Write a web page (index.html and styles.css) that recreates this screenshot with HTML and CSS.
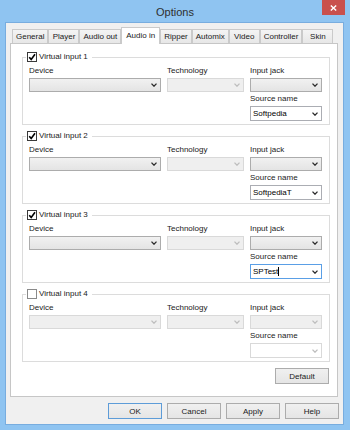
FILE: index.html
```html
<!DOCTYPE html>
<html>
<head>
<meta charset="utf-8">
<title>Options</title>
<link rel="stylesheet" href="styles.css">
</head>
<body>
<div class="window">
  <div class="titlebar">
    <span></span>
    <div class="title">Options</div>
    <button class="close" aria-label="Close"><svg width="7" height="6" viewBox="0 0 7 6"><path d="M0.8 0.5 L6.2 5.5 M6.2 0.5 L0.8 5.5" stroke="#fff" stroke-width="1.4" fill="none"/></svg></button>
  </div>
  <div class="client">
    <div class="tabs">
      <div class="tab">General</div>
      <div class="tab">Player</div>
      <div class="tab">Audio out</div>
      <div class="tab active">Audio in</div>
      <div class="tab">Ripper</div>
      <div class="tab">Automix</div>
      <div class="tab">Video</div>
      <div class="tab">Controller</div>
      <div class="tab">Skin</div>
    </div>
    <div class="panel">
      <fieldset class="group">
        <legend class="legend"><span class="check"><svg width="8" height="8" viewBox="0 0 8 8"><path d="M1.2 4.2 L3.2 6.4 L7 1.2" stroke="#000" stroke-width="1.6" fill="none"/></svg></span>Virtual input 1</legend>
        <div class="grid">
          <div class="lbl">Device</div>
          <div class="lbl">Technology</div>
          <div class="lbl">Input jack</div>
          <div class="combo"><span class="val"></span><svg class="chev" width="6" height="4" viewBox="0 0 6 4"><path d="M0.5 0.6 L3 3.2 L5.5 0.6" stroke="currentColor" stroke-width="1.3" fill="none"/></svg></div>
          <div class="combo dis"><span class="val"></span><svg class="chev" width="6" height="4" viewBox="0 0 6 4"><path d="M0.5 0.6 L3 3.2 L5.5 0.6" stroke="currentColor" stroke-width="1.3" fill="none"/></svg></div>
          <div class="combo"><span class="val"></span><svg class="chev" width="6" height="4" viewBox="0 0 6 4"><path d="M0.5 0.6 L3 3.2 L5.5 0.6" stroke="currentColor" stroke-width="1.3" fill="none"/></svg></div>
          <div class="lbl c3">Source name</div>
          <div class="combo edit c3"><span class="val">Softpedia</span><svg class="chev" width="6" height="4" viewBox="0 0 6 4"><path d="M0.5 0.6 L3 3.2 L5.5 0.6" stroke="currentColor" stroke-width="1.3" fill="none"/></svg></div>
        </div>
      </fieldset>
      <fieldset class="group">
        <legend class="legend"><span class="check"><svg width="8" height="8" viewBox="0 0 8 8"><path d="M1.2 4.2 L3.2 6.4 L7 1.2" stroke="#000" stroke-width="1.6" fill="none"/></svg></span>Virtual input 2</legend>
        <div class="grid">
          <div class="lbl">Device</div>
          <div class="lbl">Technology</div>
          <div class="lbl">Input jack</div>
          <div class="combo"><span class="val"></span><svg class="chev" width="6" height="4" viewBox="0 0 6 4"><path d="M0.5 0.6 L3 3.2 L5.5 0.6" stroke="currentColor" stroke-width="1.3" fill="none"/></svg></div>
          <div class="combo dis"><span class="val"></span><svg class="chev" width="6" height="4" viewBox="0 0 6 4"><path d="M0.5 0.6 L3 3.2 L5.5 0.6" stroke="currentColor" stroke-width="1.3" fill="none"/></svg></div>
          <div class="combo"><span class="val"></span><svg class="chev" width="6" height="4" viewBox="0 0 6 4"><path d="M0.5 0.6 L3 3.2 L5.5 0.6" stroke="currentColor" stroke-width="1.3" fill="none"/></svg></div>
          <div class="lbl c3">Source name</div>
          <div class="combo edit c3"><span class="val">SoftpediaT</span><svg class="chev" width="6" height="4" viewBox="0 0 6 4"><path d="M0.5 0.6 L3 3.2 L5.5 0.6" stroke="currentColor" stroke-width="1.3" fill="none"/></svg></div>
        </div>
      </fieldset>
      <fieldset class="group">
        <legend class="legend"><span class="check"><svg width="8" height="8" viewBox="0 0 8 8"><path d="M1.2 4.2 L3.2 6.4 L7 1.2" stroke="#000" stroke-width="1.6" fill="none"/></svg></span>Virtual input 3</legend>
        <div class="grid">
          <div class="lbl">Device</div>
          <div class="lbl">Technology</div>
          <div class="lbl">Input jack</div>
          <div class="combo"><span class="val"></span><svg class="chev" width="6" height="4" viewBox="0 0 6 4"><path d="M0.5 0.6 L3 3.2 L5.5 0.6" stroke="currentColor" stroke-width="1.3" fill="none"/></svg></div>
          <div class="combo dis"><span class="val"></span><svg class="chev" width="6" height="4" viewBox="0 0 6 4"><path d="M0.5 0.6 L3 3.2 L5.5 0.6" stroke="currentColor" stroke-width="1.3" fill="none"/></svg></div>
          <div class="combo"><span class="val"></span><svg class="chev" width="6" height="4" viewBox="0 0 6 4"><path d="M0.5 0.6 L3 3.2 L5.5 0.6" stroke="currentColor" stroke-width="1.3" fill="none"/></svg></div>
          <div class="lbl c3">Source name</div>
          <div class="combo edit focus c3"><span class="val">SPTest<span class="caret"></span></span><svg class="chev" width="6" height="4" viewBox="0 0 6 4"><path d="M0.5 0.6 L3 3.2 L5.5 0.6" stroke="currentColor" stroke-width="1.3" fill="none"/></svg></div>
        </div>
      </fieldset>
      <fieldset class="group">
        <legend class="legend"><span class="check off"></span>Virtual input 4</legend>
        <div class="grid">
          <div class="lbl">Device</div>
          <div class="lbl">Technology</div>
          <div class="lbl">Input jack</div>
          <div class="combo dis"><span class="val"></span><svg class="chev" width="6" height="4" viewBox="0 0 6 4"><path d="M0.5 0.6 L3 3.2 L5.5 0.6" stroke="currentColor" stroke-width="1.3" fill="none"/></svg></div>
          <div class="combo dis"><span class="val"></span><svg class="chev" width="6" height="4" viewBox="0 0 6 4"><path d="M0.5 0.6 L3 3.2 L5.5 0.6" stroke="currentColor" stroke-width="1.3" fill="none"/></svg></div>
          <div class="combo dis"><span class="val"></span><svg class="chev" width="6" height="4" viewBox="0 0 6 4"><path d="M0.5 0.6 L3 3.2 L5.5 0.6" stroke="currentColor" stroke-width="1.3" fill="none"/></svg></div>
          <div class="lbl c3">Source name</div>
          <div class="combo edit dis c3"><span class="val"></span><svg class="chev" width="6" height="4" viewBox="0 0 6 4"><path d="M0.5 0.6 L3 3.2 L5.5 0.6" stroke="currentColor" stroke-width="1.3" fill="none"/></svg></div>
        </div>
      </fieldset>
      <div class="panel-foot"><button class="btn">Default</button></div>
    </div>
    <div class="buttons">
      <button class="btn primary">OK</button>
      <button class="btn">Cancel</button>
      <button class="btn">Apply</button>
      <button class="btn">Help</button>
    </div>
  </div>
</div>
</body>
</html>
```

FILE: styles.css
```css
* { box-sizing: border-box; }

body {
  margin: 0;
  font-family: "Liberation Sans", Arial, sans-serif;
  font-size: 8px;
  color: #1a1a1a;
}

.window {
  width: 350px;
  height: 430px;
  background: #8fc4f1;
  display: flex;
  flex-direction: column;
}

.titlebar {
  height: 22px;
  display: grid;
  grid-template-columns: 1fr auto 1fr;
  align-items: start;
}

.title {
  font-size: 11px;
  line-height: 12px;
  margin-top: 6px;
  color: #2e2e2e;
}

.close {
  justify-self: end;
  margin-right: 5px;
  margin-top: 0;
  width: 23px;
  height: 15px;
  padding: 0;
  border: none;
  background: #c9504d;
  display: flex;
  align-items: center;
  justify-content: center;
}

.client {
  flex: 1;
  margin: 0 6px 5px 5px;
  background: #f0f0f0;
  border: 1px solid #78addf;
  padding: 4px 4px 0 4px;
  display: flex;
  flex-direction: column;
}

.tabs {
  display: flex;
  align-items: flex-end;
  height: 16px;
  margin-left: 2px;
}

.tab {
  height: 14px;
  min-width: 31px;
  padding: 0 3px;
  border: 1px solid #cacaca;
  border-bottom: none;
  background: linear-gradient(#f4f4f4, #e7e7e7);
  line-height: 13px;
  text-align: center;
  white-space: nowrap;
  color: #1a1a1a;
}

.tab.active {
  height: 17px;
  background: #fff;
  margin-bottom: -1px;
  line-height: 15px;
  padding: 0 4px;
  position: relative;
  z-index: 1;
}

.panel {
  height: 354px;
  margin-right: 1px;
  background: #fff;
  border: 1px solid #c6c6c6;
  padding: 7px 7px 0 11px;
  display: flex;
  flex-direction: column;
  gap: 5px;
}

.group {
  margin: 0;
  min-width: 0;
  border: 1px solid #dcdcdc;
  padding: 3px 6px 3px 6px;
}

.legend {
  display: flex;
  align-items: center;
  gap: 2px;
  height: 12px;
  line-height: 12px;
  padding: 0 4px 0 1px;
  margin-left: -3px;
  color: #1a1a1a;
}

.check {
  width: 10px;
  height: 10px;
  border: 1px solid #3a3a3a;
  background: #fff;
  display: flex;
  align-items: center;
  justify-content: center;
}

.check.off {
  border-color: #8a8a8a;
}

.grid {
  display: grid;
  grid-template-columns: 132px 77px 72px;
  grid-template-rows: 10px 14px 10px 15px;
  column-gap: 6px;
  row-gap: 2px;
}

.lbl {
  line-height: 10px;
  white-space: nowrap;
  color: #1a1a1a;
}

.c3 {
  grid-column: 3;
}

.combo {
  display: flex;
  align-items: center;
  justify-content: space-between;
  border: 1px solid #acacac;
  background: linear-gradient(#f1f1f1, #e4e4e4);
  padding: 0 3px 0 2px;
  color: #2a2a2a;
}

.combo .val {
  color: #000;
  display: flex;
  align-items: center;
}

.combo.dis {
  border-color: #d9d9d9;
  background: #efefef;
  color: #bdbdbd;
}

.combo.edit {
  background: #fff;
  border-color: #abadb3;
  color: #2a2a2a;
}

.combo.edit.focus {
  border-color: #5a9fe6;
}

.combo.edit.dis {
  border-color: #d9d9d9;
  color: #bdbdbd;
}

.caret {
  display: inline-block;
  width: 1px;
  height: 9px;
  background: #000;
}

.panel-foot {
  display: flex;
  justify-content: flex-end;
  margin-top: 1px;
}

.panel-foot .btn {
  margin-right: 1px;
}

.btn {
  width: 54px;
  height: 16px;
  padding: 0;
  border: 1px solid #acacac;
  background: linear-gradient(#f0f0f0, #e5e5e5);
  font-family: "Liberation Sans", Arial, sans-serif;
  font-size: 8px;
  color: #1a1a1a;
}

.btn.primary {
  border-color: #5d9cd8;
}

.buttons {
  display: flex;
  justify-content: flex-end;
  gap: 5px;
  margin-top: 6px;
}
```
